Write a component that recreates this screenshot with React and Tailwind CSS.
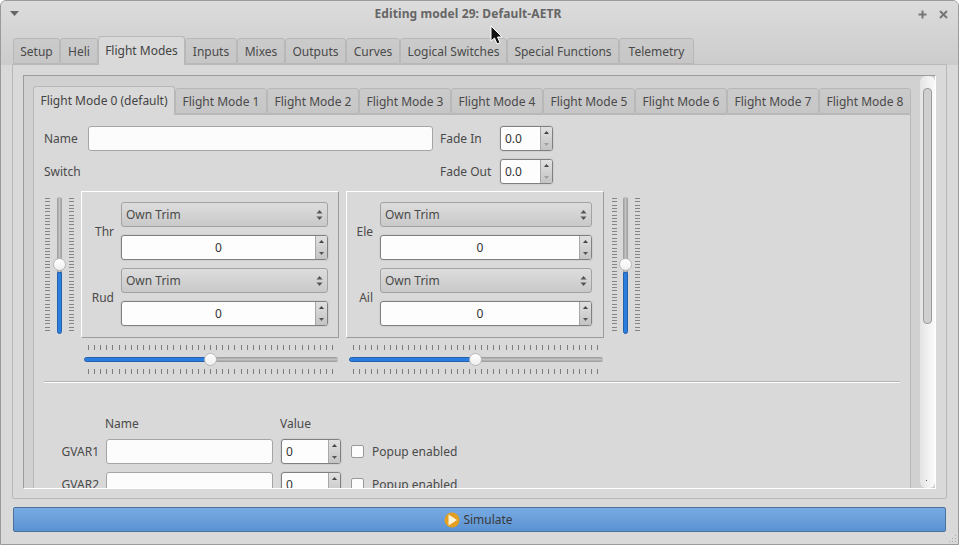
const OUTER_TABS = [
  { label: "Setup", w: "w-[47px]" },
  { label: "Heli", w: "w-[38px]" },
  { label: "Flight Modes", w: "w-[87px]", active: true },
  { label: "Inputs", w: "w-[52px]" },
  { label: "Mixes", w: "w-[48px]" },
  { label: "Outputs", w: "w-[61px]" },
  { label: "Curves", w: "w-[54px]" },
  { label: "Logical Switches", w: "w-[107px]" },
  { label: "Special Functions", w: "w-[112px]" },
  { label: "Telemetry", w: "w-[75px]" },
];

const INNER_TABS = [
  { label: "Flight Mode 0 (default)", w: "w-[142px]", active: true },
  { label: "Flight Mode 1", w: "w-[92px]" },
  { label: "Flight Mode 2", w: "w-[92px]" },
  { label: "Flight Mode 3", w: "w-[92px]" },
  { label: "Flight Mode 4", w: "w-[92px]" },
  { label: "Flight Mode 5", w: "w-[92px]" },
  { label: "Flight Mode 6", w: "w-[92px]" },
  { label: "Flight Mode 7", w: "w-[92px]" },
  { label: "Flight Mode 8", w: "w-[92px]" },
];

function Tab({ label, w, active }) {
  return (
    <div
      className={`${w} flex shrink-0 items-center justify-center whitespace-nowrap rounded-t-[3px] border border-[#b8b8b8] ${
        active
          ? "z-10 -mt-[2px] h-[29px] border-b-0 bg-[#d9d9d9] text-[#444]"
          : "h-[26px] bg-gradient-to-b from-[#cbcbcb] to-[#c6c6c6] pt-[2px] text-[#4a4a4a]"
      }`}
    >
      {label}
    </div>
  );
}

// Tiny up / down arrows used by the spin boxes
function SpinArrows({ dim }) {
  return (
    <div className="flex h-full w-[12px] shrink-0 flex-col border-l border-[#a8a8a8] bg-gradient-to-b from-[#e0e0e0] to-[#c4c4c4]">
      <div className="flex flex-1 items-center justify-center">
        <svg width="5" height="3" viewBox="0 0 5 3"><path d="M2.5 0L5 3H0z" fill="#444" /></svg>
      </div>
      <div className="flex flex-1 items-center justify-center">
        <svg width="5" height="3" viewBox="0 0 5 3"><path d="M0 0h5L2.500 3z" fill={dim ? "#a0a0a0" : "#555"} /></svg>
      </div>
    </div>
  );
}

function Spin({ value, w, center, dim, className = "" }) {
  return (
    <div className={`${w} ${className} flex h-[25px] shrink-0 overflow-hidden rounded-[3px] border border-[#808080] bg-[#fdfdfd] text-[#333] ring-1 ring-[#cfcfcf]`}>
      <div className={`flex flex-1 items-center ${center ? "justify-center" : "pl-[4px]"}`}>{value}</div>
      <SpinArrows dim={dim} />
    </div>
  );
}

function Combo({ w }) {
  return (
    <div className={`${w} flex h-[25px] items-center justify-between rounded-[3px] border border-[#a2a2a2] bg-gradient-to-b from-[#dddddd] to-[#c9c9c9] pl-[4px] pr-[4px] text-[#4a4a4a]`}>
      <span>Own Trim</span>
      <svg width="7" height="14" viewBox="0 0 7 14">
        <path d="M3.500 2L6.500 5.500H0.500z" fill="#555" />
        <path d="M0.500 8.500h6L3.500 12z" fill="#555" />
      </svg>
    </div>
  );
}

function TrimRow({ label, labelW, w }) {
  return (
    <div className="flex items-center">
      <div className={`${labelW} pt-[2px] text-right text-[#4a4a4a]`}>{label}</div>
      <div className="ml-[7px] flex flex-col gap-[8px]">
        <Combo w={w} />
        <Spin value="0" w={w} center />
      </div>
    </div>
  );
}

function TrimBox({ rows, labelW, w, className = "" }) {
  return (
    <div className={`flex h-[147px] w-[258px] shrink-0 flex-col gap-[8px] border border-b-[#9c9c9c] border-l-white border-r-[#9c9c9c] border-t-white pt-[10px] ${className}`}>
      {rows.map((r) => (
        <TrimRow key={r} label={r} labelW={labelW} w={w} />
      ))}
    </div>
  );
}

function VTicks() {
  const ys = Array.from({ length: 41 }, (_, i) => Math.round(i * 3.3) + 0.5);
  return (
    <svg width="5" height="134" className="shrink-0">
      {ys.map((y) => (
        <line key={y} x1="0" x2="5" y1={y} y2={y} stroke="#858585" />
      ))}
    </svg>
  );
}

function HTicks() {
  const xs = Array.from({ length: 41 }, (_, i) => Math.round(i * 6.1) + 0.5);
  return (
    <svg width="246" height="5" className="block">
      {xs.map((x) => (
        <line key={x} x1={x} x2={x} y1="0" y2="5" stroke="#7c7c7c" />
      ))}
    </svg>
  );
}

function Handle({ className }) {
  return <div className={`absolute h-[13px] w-[13px] rounded-full border border-[#b8b8b8] bg-gradient-to-b from-white to-[#eeeeee] ${className}`} />;
}

function VSlider({ grooveGap, className = "" }) {
  return (
    <div className={`flex h-[138px] items-center ${className}`}>
      <VTicks />
      <div className={`relative flex h-[137px] w-[5px] flex-col ${grooveGap}`}>
        <div className="h-[75px] rounded-t-full bg-gradient-to-r from-[#989898] via-[#c2c2c2] to-[#989898]" />
        <div className="flex-1 rounded-b-full border border-[#2560a8] bg-[#2a7ee0]" />
        <Handle className="left-[-4px] top-[61px]" />
      </div>
      <VTicks />
    </div>
  );
}

function HSlider({ className = "" }) {
  return (
    <div className={`flex w-[254px] flex-col items-center gap-[7px] ${className}`}>
      <HTicks />
      <div className="relative flex h-[5px] w-[254px]">
        <div className="w-[126px] rounded-l-full border border-[#2560a8] bg-[#2a7ee0]" />
        <div className="flex-1 rounded-r-full bg-gradient-to-b from-[#989898] via-[#c2c2c2] to-[#989898]" />
        <Handle className="left-[120px] top-[-4px]" />
      </div>
      <HTicks />
    </div>
  );
}

function GvarRow({ label }) {
  return (
    <div className="flex h-[25px] items-center">
      <div className="w-[55px] pr-[7px] text-right text-[#4a4a4a]">{label}</div>
      <div className="h-[25px] w-[167px] rounded-[3px] border border-[#a5a5a5] bg-[#fcfcfc]" />
      <Spin value="0" w="w-[60px]" className="ml-[8px]" />
      <div className="ml-[10px] h-[13px] w-[13px] rounded-[2px] border border-[#9a9a9a] bg-[#fcfcfc]" />
      <div className="ml-[8px] text-[#4a4a4a]">Popup enabled</div>
    </div>
  );
}

export default function App() {
  return (
    <div
      className="relative h-[545px] w-[959px] overflow-hidden rounded-t-[6px] border border-[#9a9a9a] bg-[#d9d9d9] text-[12px] leading-none"
      style={{ fontFamily: '"Noto Sans", sans-serif' }}
    >
      {/* Title bar + outer tab strip share the same gradient */}
      <div className="h-[64px] bg-gradient-to-b from-[#dcdcdc] to-[#cccccc]">
        <div className="flex h-[26px] items-center justify-between pl-[9px] pr-[10px]">
          <svg width="10" height="6" viewBox="0 0 10 6"><path d="M0 0h9L4.500 5z" fill="#666" /></svg>
          <div className="ml-[-2px] font-bold tracking-[0.1px] text-[#666]">Editing model 29: Default-AETR</div>
          <div className="flex items-center gap-[12px]">
            <svg width="9" height="9" viewBox="0 0 9 9"><path d="M4.500 0.500v8M0.500 4.500h8" stroke="#777" strokeWidth="2" /></svg>
            <svg width="9" height="9" viewBox="0 0 9 9"><path d="M1 1l7 7M8 1l-7 7" stroke="#777" strokeWidth="2" /></svg>
          </div>
        </div>
        <div className="flex items-start pl-[12px] pt-[11px]">
          {OUTER_TABS.map((t) => (
            <Tab key={t.label} {...t} />
          ))}
        </div>
      </div>

      {/* Outer tab pane */}
      <div className="ml-[11px] mt-[-1px] h-[435px] w-[935px] rounded-b-[2px] border border-[#b8b8b8] bg-[#d9d9d9] pl-[10px] pt-[10px]">
        <div className="flex h-[414px] w-[913px] overflow-hidden border border-b-white border-l-[#9c9c9c] border-r-white border-t-[#9c9c9c] bg-[#d1d1d1]">
          <div className="h-full w-[896px] shrink-0 overflow-hidden pl-[9px] pt-[9px]">
            <div className="flex h-[29px] items-start pt-[3px]">
              {INNER_TABS.map((t) => (
                <Tab key={t.label} {...t} />
              ))}
            </div>

            {/* Inner tab pane */}
            <div className="h-[400px] w-[878px] border border-[#b8b8b8] bg-[#d9d9d9] pl-[10px] pt-[11px]">
              <div className="flex h-[25px] items-center">
                <div className="w-[44px] text-[#4a4a4a]">Name</div>
                <div className="h-[25px] w-[345px] rounded-[3px] border border-[#a5a5a5] bg-[#fcfcfc]" />
                <div className="ml-[7px] w-[60px] text-[#4a4a4a]">Fade In</div>
                <Spin value="0.0" w="w-[53px]" dim />
              </div>
              <div className="mt-[8px] flex h-[25px] items-center">
                <div className="w-[396px] text-[#4a4a4a]">Switch</div>
                <div className="w-[60px] text-[#4a4a4a]">Fade Out</div>
                <Spin value="0.0" w="w-[53px]" dim />
              </div>

              <div className="mt-[7px] flex items-start">
                <VSlider grooveGap="mx-[7px]" className="ml-[1px] mt-[5px]" />
                <TrimBox rows={["Thr", "Rud"]} labelW="w-[32px]" w="w-[207px]" className="ml-[7px]" />
                <TrimBox rows={["Ele", "Ail"]} labelW="w-[26px]" w="w-[212px]" className="ml-[7px]" />
                <VSlider grooveGap="ml-[6px] mr-[7px]" className="ml-[8px] mt-[5px]" />
              </div>

              <div className="mt-[7px] flex pl-[40px]">
                <HSlider />
                <HSlider className="ml-[11px]" />
              </div>

              <div className="mt-[7px] h-[2px] w-[856px] border-b border-t border-b-white border-t-[#b5b5b5]" />

              <div className="mt-[35px] flex h-[12px] items-center text-[#4a4a4a]">
                <div className="ml-[61px] w-[175px]">Name</div>
                <div>Value</div>
              </div>
              <div className="mt-[9px] flex flex-col gap-[8px] pl-[7px]">
                <GvarRow label="GVAR1" />
                <GvarRow label="GVAR2" />
              </div>
            </div>
          </div>

          {/* Scroll bar */}
          <div className="relative flex h-full w-[15px] shrink-0 justify-center rounded-[6px] bg-gradient-to-r from-[#e4e4e4] to-[#fbfbfb] pt-[12px]">
            <div className="h-[236px] w-[9px] rounded-[4px] border border-[#9a9a9a] bg-[#cfcfcf]" />
            <div className="absolute bottom-[7px] left-[6px] h-px w-px bg-[#555]" />
          </div>
        </div>
      </div>

      {/* Simulate button */}
      <div className="ml-[12px] mt-[8px] flex h-[25px] w-[933px] items-center justify-center gap-[3px] rounded-[2px] border border-[#4c709c] bg-gradient-to-b from-[#79abe2] to-[#5a92d2] pr-[2px] text-[#3a3a3a]">
        <svg width="16" height="16" viewBox="0 0 16 16">
          <circle cx="8" cy="8" r="7.500" fill="#e3a020" />
          <path d="M4.500 2.500L13 8L4.500 13.500z" fill="#fdf3d8" />
        </svg>
        <span>Simulate</span>
      </div>

      {/* Window resize grip */}
      <svg width="10" height="10" viewBox="0 0 10 10" className="absolute bottom-[1px] right-[1px]">
        {[[8, 2], [5, 5], [8, 5], [2, 8], [5, 8], [8, 8]].map(([x, y]) => (
          <rect key={`${x}-${y}`} x={x} y={y} width="1" height="1" fill="#a8a8a8" />
        ))}
      </svg>

      {/* Mouse pointer caught in the screenshot */}
      <svg width="13" height="20" viewBox="0 0 13 20" className="absolute left-[489px] top-[24px]">
        <path d="M1 1v15l3.500-3 2.500 6 3-1.300-2.500-5.700H12z" fill="#111" stroke="#fff" strokeWidth="1" />
      </svg>
    </div>
  );
}
